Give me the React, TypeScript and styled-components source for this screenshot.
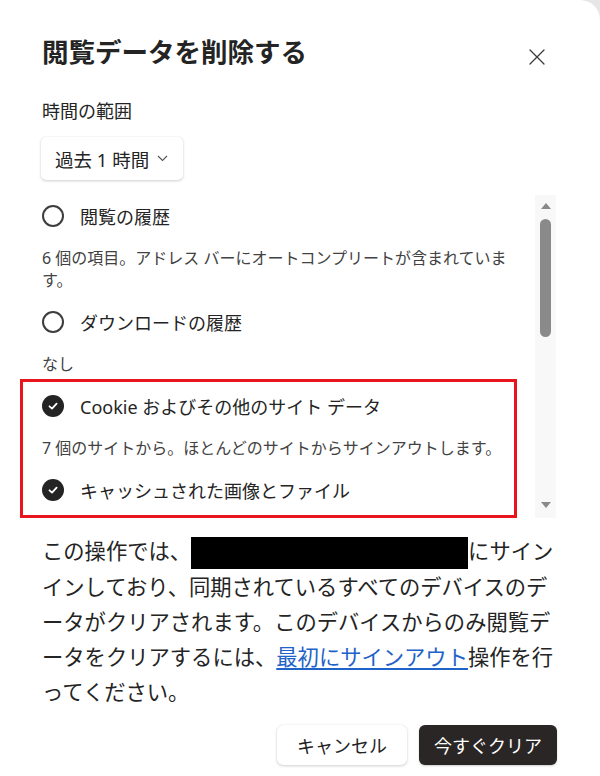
import React from 'react';
import styled, { createGlobalStyle } from 'styled-components';

const GlobalStyle = createGlobalStyle`
  html, body {
    margin: 0;
    padding: 0;
    background: #e6e6e6;
  }

  body {
    font-family: 'Noto Sans', 'Noto Sans CJK JP', sans-serif;
    color: #242424;
  }
`;

type Item = {
  label: string;
  desc: string;
  checked: boolean;
};

const items: Item[] = [
  {
    label: '閲覧の履歴',
    desc: '6 個の項目。アドレス バーにオートコンプリートが含まれています。',
    checked: false,
  },
  { label: 'ダウンロードの履歴', desc: 'なし', checked: false },
];

const marked: Item[] = [
  {
    label: 'Cookie およびその他のサイト データ',
    desc: '7 個のサイトから。ほとんどのサイトからサインアウトします。',
    checked: true,
  },
  { label: 'キャッシュされた画像とファイル', desc: '', checked: true },
];

const rest: Item[] = [
  { label: 'パスワード', desc: 'なし', checked: false },
  { label: 'オートフィル フォーム データ', desc: 'なし', checked: false },
];

const Option = ({ item }: { item: Item }) => (
  <>
    <Row>
      {item.checked ? (
        <Checked>
          <svg width="12" height="12" viewBox="0 0 12 12">
            <polyline
              points="2.5,6.3 5,8.6 9.6,3.6"
              fill="none"
              stroke="#fff"
              strokeWidth="1.8"
              strokeLinecap="round"
              strokeLinejoin="round"
            />
          </svg>
        </Checked>
      ) : (
        <Unchecked />
      )}
      <RowLabel>{item.label}</RowLabel>
    </Row>
    {item.desc && <Desc>{item.desc}</Desc>}
  </>
);

const App = () => {
  return (
    <>
      <GlobalStyle />
      <Dialog>
        <Header>
          <Title>閲覧データを削除する</Title>
          <Close aria-label="閉じる">
            <svg width="16" height="16" viewBox="0 0 16 16">
              <path
                d="M1 1 L15 15 M15 1 L1 15"
                stroke="#3b3b3b"
                strokeWidth="1.3"
                strokeLinecap="round"
              />
            </svg>
          </Close>
        </Header>

        <FieldLabel>時間の範囲</FieldLabel>
        <Select>
          過去 1 時間
          <svg width="11" height="7" viewBox="0 0 11 7">
            <polyline
              points="1,1 5.5,5.5 10,1"
              fill="none"
              stroke="#555"
              strokeWidth="1.1"
            />
          </svg>
        </Select>

        <ScrollRegion>
          <List>
            {items.map((item) => (
              <Option key={item.label} item={item} />
            ))}
            <Highlight>
              {marked.map((item) => (
                <Option key={item.label} item={item} />
              ))}
            </Highlight>
            {rest.map((item) => (
              <Option key={item.label} item={item} />
            ))}
          </List>
          <Scrollbar>
            <Arrow />
            <Thumb />
            <Arrow down />
          </Scrollbar>
        </ScrollRegion>

        <Notice>
          この操作では、
          <Redacted />
          にサインインしており、同期されているすべてのデバイスのデータがクリアされます。このデバイスからのみ閲覧データをクリアするには、
          <Link href="#">最初にサインアウト</Link>
          操作を行ってください。
        </Notice>

        <Footer>
          <Button>キャンセル</Button>
          <Button primary>今すぐクリア</Button>
        </Footer>
      </Dialog>
    </>
  );
};

const Dialog = styled.div`
  box-sizing: border-box;
  width: 600px;
  height: 776px;
  padding: 36px 43px 0 42px;
  background: #fff;
  border-top-right-radius: 20px;
  display: flex;
  flex-direction: column;
`;

const Header = styled.div`
  display: flex;
  align-items: flex-start;
  justify-content: space-between;
`;

const Title = styled.h1`
  margin: 0;
  font-size: 26.5px;
  line-height: 32px;
  font-weight: 700;
  color: #242424;
`;

const Close = styled.button`
  width: 42px;
  height: 42px;
  margin-right: -1px;
  padding: 0;
  border: none;
  background: transparent;
  display: flex;
  align-items: center;
  justify-content: center;
  cursor: pointer;
`;

const FieldLabel = styled.div`
  margin-top: 20px;
  font-size: 18px;
  line-height: 26px;
`;

const Select = styled.button`
  align-self: flex-start;
  margin: 13px 0 0 -1px;
  height: 43px;
  padding: 0 15px 0 14px;
  display: flex;
  align-items: center;
  gap: 8px;
  border: none;
  border-radius: 5px;
  background: #fff;
  box-shadow: 0 1px 3px rgba(0, 0, 0, 0.18), 0 0 1px rgba(0, 0, 0, 0.12);
  font-family: inherit;
  font-size: 18.5px;
  color: #242424;
`;

const ScrollRegion = styled.div`
  margin: 15px 0 0 -22px;
  height: 323px;
  display: flex;
`;

const List = styled.div`
  flex: 1;
  overflow: hidden;
  padding: 0 19px 0 22px;
`;

const Row = styled.div`
  height: 42px;
  display: flex;
  align-items: center;
  gap: 16px;
`;

const Unchecked = styled.span`
  box-sizing: border-box;
  width: 22px;
  height: 22px;
  border: 2px solid #3d3d3d;
  border-radius: 50%;
  flex-shrink: 0;
`;

const Checked = styled.span`
  width: 22px;
  height: 22px;
  border-radius: 50%;
  background: #242424;
  display: flex;
  align-items: center;
  justify-content: center;
  flex-shrink: 0;
`;

const RowLabel = styled.span`
  font-size: 18px;
`;

const Desc = styled.p`
  margin: 10px 0;
  font-size: 16px;
  line-height: 22px;
  color: #424242;
`;

const Highlight = styled.div`
  position: relative;

  &::after {
    content: '';
    position: absolute;
    top: -6px;
    bottom: -7px;
    left: -22px;
    right: -1px;
    border: 3px solid #e8141e;
    pointer-events: none;
  }
`;

const Scrollbar = styled.div`
  width: 21px;
  margin-right: 1px;
  background: #f8f8f8;
  display: flex;
  flex-direction: column;
  align-items: center;
  padding: 8px 0 10px;
  box-sizing: border-box;
`;

const Arrow = styled.span<{ down?: boolean }>`
  width: 0;
  height: 0;
  border-left: 5px solid transparent;
  border-right: 5px solid transparent;
  ${(p) =>
    p.down
      ? 'border-top: 6px solid #8a8a8a; margin-top: auto;'
      : 'border-bottom: 6px solid #8a8a8a;'}
`;

const Thumb = styled.span`
  margin-top: 10px;
  width: 11px;
  height: 118px;
  border-radius: 6px;
  background: #8a8a8a;
`;

const Notice = styled.p`
  margin: 15px 0 0;
  font-size: 21.3px;
  line-height: 35px;
  color: #242424;
`;

const Redacted = styled.span`
  display: inline-block;
  width: 277px;
  height: 32px;
  background: #000;
  vertical-align: middle;
`;

const Link = styled.a`
  color: #1f63c8;
  text-decoration: underline;
  text-underline-offset: 3px;
`;

const Footer = styled.div`
  margin-top: 16px;
  display: flex;
  justify-content: flex-end;
  gap: 12px;
`;

const Button = styled.button<{ primary?: boolean }>`
  height: 40px;
  padding: 0 ${(p) => (p.primary ? '15px' : '20px')};
  border: none;
  border-radius: 6px;
  font-family: inherit;
  font-size: 18px;
  cursor: pointer;
  color: ${(p) => (p.primary ? '#fff' : '#242424')};
  background: ${(p) => (p.primary ? '#2a2625' : '#fff')};
  box-shadow: ${(p) =>
    p.primary
      ? '0 1px 2px rgba(0, 0, 0, 0.2)'
      : '0 1px 3px rgba(0, 0, 0, 0.18), 0 0 1px rgba(0, 0, 0, 0.12)'};
`;

export default App;
